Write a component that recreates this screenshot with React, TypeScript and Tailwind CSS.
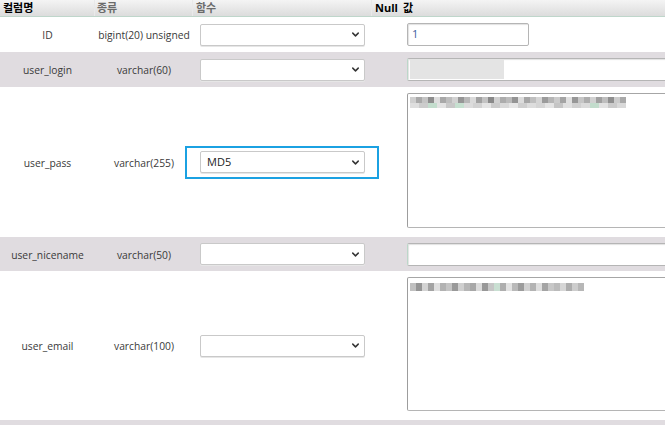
import { ChevronDown } from "lucide-react";

type Row = {
    name: string;
    type: string;
    fn?: string;
    shaded?: boolean;
    value: "id" | "login" | "pass" | "nick" | "email";
    h: string;
};

const rows: Row[] = [
    { name: "ID", type: "bigint(20) unsigned", h: "h-[35px]", value: "id" },
    { name: "user_login", type: "varchar(60)", h: "h-[35px]", shaded: true, value: "login" },
    { name: "user_pass", type: "varchar(255)", fn: "MD5", h: "h-[150px]", value: "pass" },
    { name: "user_nicename", type: "varchar(50)", h: "h-[34px]", shaded: true, value: "nick" },
    { name: "user_email", type: "varchar(100)", h: "h-[149px]", value: "email" },
];

// mosaic of the blurred-out values
const passLine1 = ["#cfcfcf", "#a9a9a9", "#c4c4c4", "#8e8e8e", "#dedede", "#a8a8a8", "#bdbdbd", "#d2d2d2", "#969696", "#b8b8b8", "#dadada", "#a1a1a1", "#c3c3c3", "#898989", "#d0d0d0", "#acacac", "#bbbbbb", "#949494", "#dcdcdc", "#a6a6a6", "#bfbfbf", "#d5d5d5", "#9b9b9b", "#b6b6b6", "#cbcbcb", "#a4a4a4", "#e0e0e0", "#979797", "#c6c6c6", "#adadad", "#d1d1d1", "#a0a0a0", "#bebebe", "#8f8f8f", "#cccccc", "#a9a9a9"];
const passLine2 = ["#dedede", "#cccccc", "#c3ddcd", "#e2e2e2", "#c8c8c8", "#c6e0d0", "#dcdcdc", "#d2d2d2", "#e4e4e4", "#cbcbcb", "#d9d9d9", "#e6e6e6", "#cfcfcf", "#dddddd", "#d5d5d5", "#e4e4e4", "#c5c5c5", "#e0e0e0", "#d0d0d0", "#dbdbdb", "#c2dccc", "#e2e2e2", "#cbcbcb", "#d9d9d9"];
const emailLine = ["#c0c0c0", "#959595", "#d3d3d3", "#a3a3a3", "#dfdfdf", "#b2b2b2", "#c4c4c4", "#999999", "#cfcfcf", "#b6b6b6", "#a7a7a7", "#dbdbdb", "#989898", "#c6c6c6", "#c9dfd2", "#aeaeae", "#e2e2e2", "#b9b9b9", "#9c9c9c", "#d1d1d1", "#b3b3b3", "#dedede", "#a4a4a4", "#c7c7c7", "#bbbbbb", "#d6d6d6", "#adadad", "#cdcdcd", "#b7b7b7"];

function Mosaic({ colors, cell }: { colors: string[]; cell: string }) {
    return (
        <div className="flex">
            {colors.map((c, i) => (
                <span key={i} className={cell} style={{ backgroundColor: c }} />
            ))}
        </div>
    );
}

function FnSelect({ value }: { value?: string }) {
    return (
        <div className="flex h-[22px] w-[165px] items-center justify-between rounded-[2px] border border-[#c9c9c9] bg-white pl-[6px] pr-[3px] text-[11px] text-[#222] shadow-[0_1px_0_#e6e6e6]">
            <span>{value ?? ""}</span>
            <ChevronDown size={11} strokeWidth={3.2} className="text-[#333]" />
        </div>
    );
}

function Value({ kind }: { kind: Row["value"] }) {
    if (kind === "id") {
        return (
            <div className="flex h-[23px] w-[122px] items-center rounded-[2px] border border-[#b5b5b5] bg-white pl-[4px] text-[11px] text-[#3b5d9c] shadow-[inset_1px_1px_1px_#e2e2e2]">
                1
            </div>
        );
    }
    if (kind === "login" || kind === "nick") {
        return (
            <div className="flex h-[23px] w-[270px] items-center rounded-l-[2px] border border-[#b5b5b5] border-l-[#bcd7c9] bg-white pl-[2px] shadow-[inset_1px_1px_1px_#e2e2e2]">
                {kind === "login" && <span className="h-[19px] w-[94px] bg-[#e4e4e4]" />}
            </div>
        );
    }
    if (kind === "pass") {
        return (
            <div className="mt-[6px] h-[135px] w-[270px] self-start rounded-l-[2px] border border-[#b5b5b5] border-l-[#9d9d9d] border-t-[#a6a6a6] bg-white pl-[2px] pt-[3px]">
                <Mosaic colors={passLine1} cell="h-[6px] w-[6px]" />
                <Mosaic colors={passLine2} cell="h-[5px] w-[9px]" />
            </div>
        );
    }
    return (
        <div className="mt-[6px] h-[134px] w-[270px] self-start rounded-l-[2px] border border-[#b5b5b5] border-l-[#9d9d9d] border-t-[#a6a6a6] bg-white pl-[2px] pt-[5px]">
            <Mosaic colors={emailLine} cell="h-[8px] w-[6px]" />
        </div>
    );
}

export default function App() {
    return (
        <div className="h-[425px] w-[665px] overflow-hidden bg-white font-['Open_Sans','Noto_Sans_CJK_KR',sans-serif] text-[#3a3a3a]">
            <div className="grid h-[17px] grid-cols-[95px_98px_179px_28px_1fr] border-b border-[#bfd6cb] bg-gradient-to-b from-[#f4f4f4] to-[#dcdcdc] text-[11px] font-bold leading-[16px]">
                <div className="border-r border-[#e9e9e9] pl-[3px] text-black">컬럼명</div>
                <div className="border-r border-[#e9e9e9] pl-[2px] text-[#6b6b6b]">종류</div>
                <div className="border-r border-[#e9e9e9] pl-[3px] text-[#6b6b6b]">함수</div>
                <div className="pl-[3px] text-black">Null</div>
                <div className="pl-[3px] text-black">값</div>
            </div>

            {rows.map((r) => (
                <div
                    key={r.name}
                    className={`grid grid-cols-[95px_98px_179px_28px_1fr] items-center text-[10.3px] ${r.h} ${r.shaded ? "bg-[#e0dce0]" : "bg-white"}`}
                >
                    <div className="pt-[3px] text-center">{r.name}</div>
                    <div className="pt-[3px] text-center">{r.type}</div>
                    <div className="pl-[7px]">
                        {r.fn ? (
                            <div className="relative w-[165px]">
                                <div className="absolute -bottom-[6px] -left-[15px] -right-[14px] -top-[5px] border-2 border-[#1ba1e2]" />
                                <FnSelect value={r.fn} />
                            </div>
                        ) : (
                            <FnSelect />
                        )}
                    </div>
                    <div />
                    <div className="flex h-full items-center pl-[7px]">
                        <Value kind={r.value} />
                    </div>
                </div>
            ))}

            <div className="h-[6px] bg-[#e0dce0]" />
        </div>
    );
}
